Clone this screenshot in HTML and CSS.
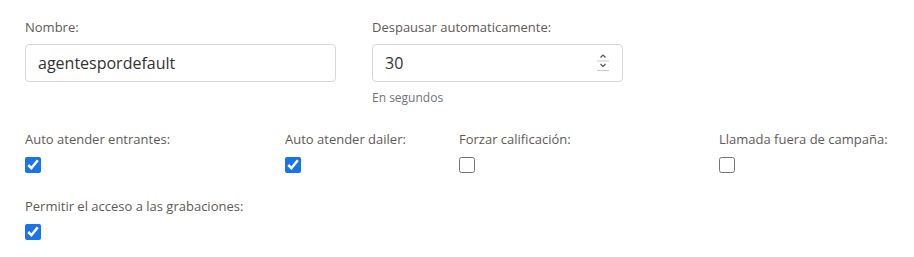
FILE: index.html
```html
<!DOCTYPE html>
<html lang="es">

<head>
  <meta charset="UTF-8" />
  <meta name="viewport" content="width=device-width, initial-scale=1.0" />
  <title>Grupo de agentes</title>
  <link rel="stylesheet" href="styles.css">
</head>

<body>
  <form class="form">
    <!-- Datos basicos -->
    <div class="row row-top">
      <div class="field">
        <label for="nombre">Nombre:</label>
        <input type="text" id="nombre" class="input input-name" value="agentespordefault" />
      </div>
      <div class="field">
        <label for="despausar">Despausar automaticamente:</label>
        <div class="num-wrap">
          <input type="number" id="despausar" class="input input-num" value="30" />
          <!-- spinner siempre visible -->
          <svg class="spinner" width="14" height="24" viewBox="0 0 14 24">
            <path d="M4.5 8.5 L7 6 L9.5 8.5" fill="none" stroke="#555" stroke-width="1.2" />
            <line x1="1" y1="12" x2="13" y2="12" stroke="#c8c8c8" stroke-width="1" />
            <path d="M4.5 15 L7 17.5 L9.5 15" fill="none" stroke="#555" stroke-width="1.2" />
            <line x1="1" y1="21.5" x2="13" y2="21.5" stroke="#c8c8c8" stroke-width="1" />
          </svg>
        </div>
        <small class="help">En segundos</small>
      </div>
    </div>

    <!-- Opciones -->
    <div class="row row-checks">
      <div class="check">
        <label for="auto_entrantes">Auto atender entrantes:</label>
        <input type="checkbox" id="auto_entrantes" checked />
      </div>
      <div class="check">
        <label for="auto_dialer">Auto atender dailer:</label>
        <input type="checkbox" id="auto_dialer" checked />
      </div>
      <div class="check">
        <label for="forzar">Forzar calificación:</label>
        <input type="checkbox" id="forzar" />
      </div>
      <div class="check">
        <label for="fuera_campana">Llamada fuera de campaña:</label>
        <input type="checkbox" id="fuera_campana" />
      </div>
    </div>

    <div class="row row-checks">
      <div class="check">
        <label for="grabaciones">Permitir el acceso a las grabaciones:</label>
        <input type="checkbox" id="grabaciones" checked />
      </div>
    </div>
  </form>
</body>

</html>
```

FILE: styles.css
```css
/* General body styles */
body {
  font-family: 'Open Sans', sans-serif;
  background-color: #ffffff;
  color: #333;
  margin: 0;
  padding: 18px 0 0 25px;
}

.form {
  width: 889px;
}

.row {
  display: grid;
}

.row-top {
  grid-template-columns: 347px 260px;
}

.row-checks {
  grid-template-columns: 260px 174px 260px auto;
  margin-top: 24px;
}

.row-checks + .row-checks {
  margin-top: 24px;
}

label {
  display: block;
  font-size: 13px;
  font-weight: 500;
  color: #5f5a55;
  margin-bottom: 8px;
}

/* Inputs */
.input {
  box-sizing: border-box;
  height: 38px;
  padding: 6px 12px;
  font-family: inherit;
  font-size: 16px;
  color: #333;
  border: 1px solid #d4d8de;
  border-radius: 4px;
  outline: none;
}

.input-name {
  width: 311px;
}

.num-wrap {
  position: relative;
  width: 251px;
}

.input-num {
  width: 251px;
  -moz-appearance: textfield;
}

.input-num::-webkit-inner-spin-button,
.input-num::-webkit-outer-spin-button {
  -webkit-appearance: none;
  margin: 0;
}

.spinner {
  position: absolute;
  top: 5px;
  right: 13px;
}

.help {
  display: block;
  margin-top: 7px;
  font-size: 12px;
  color: #6c757d;
}

/* Checkboxes */
.check label {
  margin-bottom: 9px;
}

.check input {
  display: block;
  width: 16px;
  height: 16px;
  margin: 0;
  accent-color: #1a73e8;
}
```
